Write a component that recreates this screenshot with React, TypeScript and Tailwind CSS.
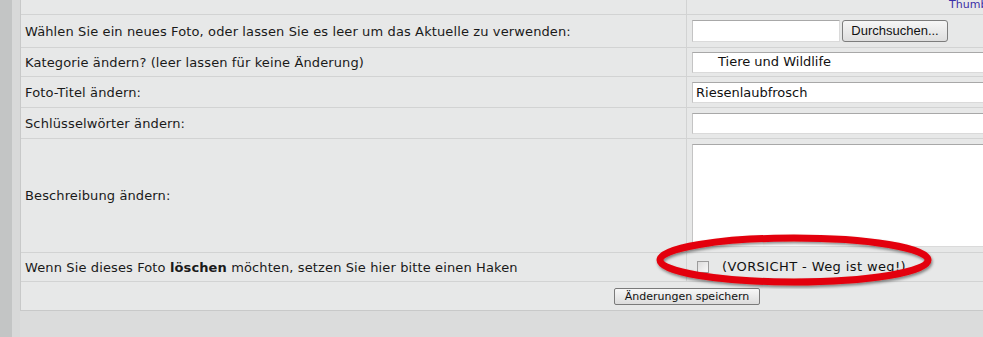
import React from 'react';

const font = { fontFamily: '"DejaVu Sans", Verdana, sans-serif' };

function Row({
  label,
  height,
  children,
}: {
  label?: React.ReactNode;
  height: string;
  children?: React.ReactNode;
}) {
  return (
    <div className={`grid grid-cols-[666px_1fr] border-b border-[#d2d3d3] ${height}`}>
      <div className="flex items-center pl-[4px] pt-[1px] border-r border-[#d2d3d3] text-[13px] tracking-[0.12px] text-[#1a1a1a]">
        {label}
      </div>
      <div className="flex items-center pl-[5px]">{children}</div>
    </div>
  );
}

const inputCls =
  'h-[21px] bg-white border border-[#dadada] border-t-[#a8a8a8] border-l-[#c4c4c4] text-[13px] text-[#111] outline-none';

export default function App() {
  return (
    <div className="w-[983px] h-[337px] overflow-hidden flex bg-[#dbdcdc]" style={font}>
      {/* side strips */}
      <div className="w-[12px] shrink-0 bg-[#c3c5c5]" />
      <div className="w-[8px] shrink-0 bg-[#d8d9d9]" />

      <div className="flex-1 min-w-0">
        <div className="w-[1100px] bg-[#e7e8e8] border-l border-b border-[#c8c9c9]">
          {/* top row, cut off */}
          <div className="grid grid-cols-[666px_1fr] h-[15px] border-b border-[#d2d3d3]">
            <div className="border-r border-[#d2d3d3]" />
            <div className="relative">
              <span className="absolute left-[262px] top-[-3px] text-[11px] text-[#3b2fa6]">Thumbnail</span>
            </div>
          </div>

          <Row
            height="h-[33px]"
            label="Wählen Sie ein neues Foto, oder lassen Sie es leer um das Aktuelle zu verwenden:"
          >
            <div className="flex items-center gap-[2px]">
              <input className={`${inputCls} w-[148px] h-[22px]`} />
              <button className="h-[22px] w-[106px] rounded-[3px] border border-[#7d7d7d] bg-gradient-to-b from-[#f6f6f6] to-[#dedede] text-[13px] text-[#111]" style={{ fontFamily: '"Liberation Sans", Arial, sans-serif' }}>
                Durchsuchen...
              </button>
            </div>
          </Row>

          <Row height="h-[29px]" label="Kategorie ändern? (leer lassen für keine Änderung)">
            <div className={`${inputCls} w-[400px] flex items-center pl-[25px]`}>Tiere und Wildlife</div>
          </Row>

          <Row height="h-[31px]" label="Foto-Titel ändern:">
            <input className={`${inputCls} w-[400px] pl-[3px]`} defaultValue="Riesenlaubfrosch" style={font} />
          </Row>

          <Row height="h-[31px]" label="Schlüsselwörter ändern:">
            <input className={`${inputCls} w-[400px]`} />
          </Row>

          <Row height="h-[114px]" label="Beschreibung ändern:">
            <textarea className="w-[400px] h-[103px] bg-white border border-[#dadada] border-t-[#a8a8a8] border-l-[#c4c4c4] resize-none outline-none" />
          </Row>

          <Row
            height="h-[29px]"
            label={
              <span>
                Wenn Sie dieses Foto <b>löschen</b> möchten, setzen Sie hier bitte einen Haken
              </span>
            }
          >
            <div className="relative flex items-center">
              <span className="ml-[5px] w-[12px] h-[12px] border border-[#9c9c9c] bg-gradient-to-br from-[#dcdcdc] to-[#fafafa]" />
              <span className="ml-[13px] text-[13px] tracking-[0.4px] text-[#111]">(VORSICHT - Weg ist weg!)</span>
              {/* red ellipse marker */}
              <svg className="absolute left-[-42px] top-[-24px] pointer-events-none" width="290" height="56" viewBox="0 0 290 56">
                <defs>
                  <filter id="sh" x="-10%" y="-30%" width="120%" height="160%">
                    <feDropShadow dx="1" dy="2" stdDeviation="1.5" floodColor="#000" floodOpacity="0.45" />
                  </filter>
                </defs>
                <ellipse cx="144" cy="27" rx="134" ry="22" fill="none" stroke="#e3000b" strokeWidth="7" filter="url(#sh)" />
              </svg>
            </div>
          </Row>

          {/* submit row */}
          <div className="h-[28px] flex items-center pl-[593px]">
            <button className="h-[17px] w-[146px] rounded-[2px] border border-[#7a7a7a] bg-gradient-to-b from-[#f7f7f7] to-[#dcdcdc] text-[11px] leading-none text-[#111]">
              Änderungen speichern
            </button>
          </div>
        </div>
      </div>
    </div>
  );
}
